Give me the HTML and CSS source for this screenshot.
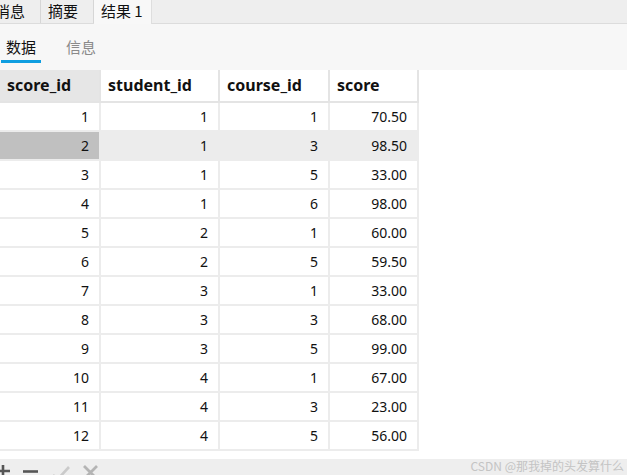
FILE: index.html
```html
<!DOCTYPE html>
<html>
<head>
<meta charset="utf-8">
<link rel="stylesheet" href="styles.css">
</head>
<body>
<div class="app">
  <div class="tabbar">
    <div class="tab tab-first">消息</div>
    <div class="tab">摘要</div>
    <div class="tab active">结果 1</div>
  </div>
  <div class="subtabs">
    <div class="subtab on">数据</div>
    <div class="subtab">信息</div>
  </div>
  <div class="grid-area">
    <table class="grid">
      <colgroup>
        <col class="c1"><col class="c2"><col class="c3"><col class="c4">
      </colgroup>
      <thead>
        <tr><th class="sel">score_id</th><th>student_id</th><th>course_id</th><th>score</th></tr>
      </thead>
      <tbody>
        <tr><td>1</td><td>1</td><td>1</td><td>70.50</td></tr>
        <tr class="cur"><td class="cursor">2</td><td>1</td><td>3</td><td>98.50</td></tr>
        <tr><td>3</td><td>1</td><td>5</td><td>33.00</td></tr>
        <tr><td>4</td><td>1</td><td>6</td><td>98.00</td></tr>
        <tr><td>5</td><td>2</td><td>1</td><td>60.00</td></tr>
        <tr><td>6</td><td>2</td><td>5</td><td>59.50</td></tr>
        <tr><td>7</td><td>3</td><td>1</td><td>33.00</td></tr>
        <tr><td>8</td><td>3</td><td>3</td><td>68.00</td></tr>
        <tr><td>9</td><td>3</td><td>5</td><td>99.00</td></tr>
        <tr><td>10</td><td>4</td><td>1</td><td>67.00</td></tr>
        <tr><td>11</td><td>4</td><td>3</td><td>23.00</td></tr>
        <tr><td>12</td><td>4</td><td>5</td><td>56.00</td></tr>
      </tbody>
    </table>
  </div>
  <div class="bottombar">
    <div class="tools">
      <svg class="ico" width="14" height="16" viewBox="0 0 14 16"><path d="M7 1v14M0 7h14" stroke="#555" stroke-width="2.6"/></svg>
      <svg class="ico" width="16" height="16" viewBox="0 0 16 16"><path d="M0 7.5h15" stroke="#555" stroke-width="2.6"/></svg>
      <svg class="ico" width="18" height="16" viewBox="0 0 18 16"><path d="M1 11l5 5M5 16L17 3" stroke="#cacaca" stroke-width="2.6" fill="none"/></svg>
      <svg class="ico" width="15" height="16" viewBox="0 0 15 16"><path d="M1 2l13 13M14 2L1 15" stroke="#b4b4b4" stroke-width="2.8"/></svg>
    </div>
    <div class="mark">CSDN @那我掉的头发算什么</div>
  </div>
</div>
</body>
</html>
```
FILE: styles.css
```css
html, body {
  margin: 0;
  padding: 0;
}
body {
  width: 627px;
  height: 475px;
  overflow: hidden;
  background: #ffffff;
  font-family: "Noto Sans", "Noto Sans CJK SC", sans-serif;
  color: #111;
}
.app {
  display: flex;
  flex-direction: column;
  height: 475px;
}
.tabbar {
  display: flex;
  height: 24px;
  background: #eeeeee;
  border-bottom: 1px solid #dcdcdc;
  box-sizing: border-box;
}
.tab {
  font-family: "Noto Sans CJK SC", sans-serif;
  font-size: 15px;
  line-height: 21px;
  width: 53px;
  padding-left: 7px;
  box-sizing: border-box;
  border-right: 1px solid #d6d6d6;
  color: #111;
  height: 23px;
}
.tab-first {
  margin-left: -12px;
}
.tab.active {
  background: #f8f8f8;
  height: 24px;
  width: 58px;
  border-right: 1px solid #dedede;
}
.subtabs {
  display: flex;
  height: 46px;
  background: #f7f7f7;
  padding-left: 1px;
  gap: 20px;
  box-sizing: border-box;
}
.subtab {
  font-family: "Noto Sans CJK SC", sans-serif;
  font-size: 15px;
  color: #8a8a8a;
  width: 40px;
  text-align: center;
  padding-top: 13px;
  height: 36px;
  box-sizing: border-box;
  line-height: 20px;
}
.subtab.on {
  color: #111;
  border-bottom: 3px solid #0f9ee0;
  height: 39px;
}
.grid-area {
  height: 389px;
  background: #fff;
}
.grid {
  border-collapse: collapse;
  table-layout: fixed;
  width: 418px;
}
.c1 { width: 100px; }
.c2 { width: 119px; }
.c3 { width: 110px; }
.c4 { width: 89px; }
.grid th {
  height: 32px;
  padding: 0 0 1px 7px;
  text-align: left;
  font-size: 16px;
  font-weight: 700;
  border-right: 2px solid #e4e4e4;
  border-bottom: 2px solid #e4e4e4;
  background: #fff;
  box-sizing: border-box;
  color: #111;
}
.grid th.sel {
  background: #e6e6e6;
}
.grid td {
  height: 29px;
  padding: 0 10px 0 0;
  text-align: right;
  font-size: 14px;
  border-right: 2px solid #ececec;
  border-bottom: 2px solid #ececec;
  box-sizing: border-box;
}
.grid tr.cur td {
  background: #ececec;
}
.grid tr.cur td.cursor {
  background: #c0c0c0;
}
.bottombar {
  flex: 1;
  background: #eeeeee;
  display: flex;
  justify-content: space-between;
  align-items: flex-start;
  overflow: hidden;
}
.tools {
  display: flex;
  align-items: flex-start;
  gap: 13px;
  padding-top: 5px;
  margin-left: -4px;
}
.ico { display: block; }
.mark {
  font-family: "Noto Sans CJK SC", sans-serif;
  font-size: 12px;
  color: #c4c4c4;
  line-height: 14px;
  padding-top: 0;
  padding-right: 3px;
}
```
